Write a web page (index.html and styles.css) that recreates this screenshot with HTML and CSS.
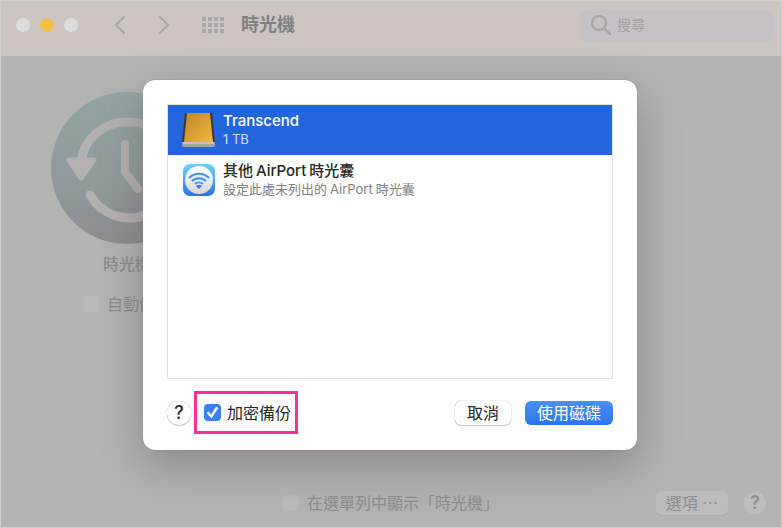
FILE: index.html
```html
<!DOCTYPE html>
<html lang="zh-Hant">
<head>
  <meta charset="UTF-8" />
  <meta name="viewport" content="width=device-width, initial-scale=1" />
  <title>時光機</title>
  <link rel="stylesheet" href="styles.css">
</head>
<body>

  <div class="window">
    <!-- Toolbar -->
    <header class="toolbar">
      <div class="lights">
        <button class="light" aria-label="關閉"></button>
        <button class="light yellow" aria-label="縮到最小"></button>
        <button class="light" aria-label="縮放"></button>
      </div>
      <nav class="nav">
        <button class="icon-button" aria-label="上一頁">
          <svg width="12" height="18" viewBox="0 0 12 18"><path d="M10 1 2 9l8 8" /></svg>
        </button>
        <button class="icon-button" aria-label="下一頁">
          <svg width="12" height="18" viewBox="0 0 12 18"><path d="m2 1 8 8-8 8" /></svg>
        </button>
      </nav>
      <button class="icon-button grid-button" aria-label="顯示全部">
        <svg width="22" height="16" viewBox="0 0 22 16">
          <path d="M0 2h22M0 8h22M0 14h22" />
        </svg>
      </button>
      <h1 class="title">時光機</h1>
      <div class="search">
        <svg width="20" height="20" viewBox="0 0 20 20"><circle cx="8" cy="8" r="7" /><path d="m13 13 6 6" /></svg>
        <input type="search" placeholder="搜尋" aria-label="搜尋" />
      </div>
    </header>

    <!-- Preference pane -->
    <main class="pane">
      <section class="sidebar">
        <svg class="logo" width="152" height="152" viewBox="0 0 152 152">
          <defs>
            <linearGradient id="disc" x1="0" y1="0" x2="0" y2="1">
              <stop offset="0" stop-color="#92a4a3" />
              <stop offset="0.6" stop-color="#909a9a" />
              <stop offset="1" stop-color="#8c8c8d" />
            </linearGradient>
          </defs>
          <circle cx="76" cy="76" r="76" fill="url(#disc)" />
          <path class="ring" d="M30 69A46 46 0 0 1 76 30A46 48 0 1 1 39 103" />
          <path class="arrow" d="M18 68h25l-13 18z" />
          <path class="hand" d="M74 52v28l13 17" />
        </svg>
        <h2 class="pane-name">時光機</h2>
        <label class="check"><input type="checkbox" class="dim-box" />自動備份</label>
      </section>
      <footer class="pane-footer">
        <label class="check menu-check"><input type="checkbox" class="dim-box" />在選單列中顯示「時光機」</label>
        <div class="footer-buttons">
          <button class="options">選項 ⋯</button>
          <button class="dim-help" aria-label="輔助說明">?</button>
        </div>
      </footer>
    </main>
  </div>

  <!-- Disk picker sheet -->
  <div class="overlay">
    <div class="sheet" role="dialog" aria-label="選擇磁碟">
      <ul class="disks" role="listbox" aria-label="磁碟">
        <li class="disk selected" role="option" aria-selected="true">
          <svg class="disk-icon" width="36" height="36" viewBox="0 0 36 36">
            <defs>
              <linearGradient id="gold" x1="0" y1="0" x2="1" y2="1">
                <stop offset="0" stop-color="#b9862d" />
                <stop offset="1" stop-color="#f4b73e" />
              </linearGradient>
            </defs>
            <path d="M4 1h27l3 29H1z" fill="#3b3631" />
            <path d="M6 1h23l3 29H3z" fill="url(#gold)" />
            <path d="M1 30h33v3q0 2-2 2H3q-2 0-2-2z" fill="#a5a6a6" />
            <path d="M2 31h31" stroke="#dededc" />
          </svg>
          <div class="disk-text">
            <strong>Transcend</strong>
            <span>1 TB</span>
          </div>
        </li>
        <li class="disk" role="option" aria-selected="false">
          <svg class="disk-icon" width="36" height="36" viewBox="0 0 36 36">
            <defs>
              <linearGradient id="sky" x1="0" y1="0" x2="0" y2="1">
                <stop offset="0" stop-color="#6ed3fb" />
                <stop offset="1" stop-color="#2f70ec" />
              </linearGradient>
              <linearGradient id="pearl" x1="0" y1="0" x2="0" y2="1">
                <stop offset="0" stop-color="#ffffff" />
                <stop offset="1" stop-color="#d5d7da" />
              </linearGradient>
            </defs>
            <rect x="2" y="2" width="32" height="32" rx="7" fill="url(#sky)" />
            <circle cx="18" cy="18" r="14" fill="url(#pearl)" />
            <g fill="none" stroke="#3f93ec" stroke-width="2">
              <path d="M8 16a14 14 0 0 1 20 0" />
              <path d="M11 19a10 10 0 0 1 14 0" />
              <path d="M14 22a6 6 0 0 1 8 0" />
            </g>
            <path d="M15 24q3-2 6 0l-3 3z" fill="#2f77e8" />
          </svg>
          <div class="disk-text">
            <strong>其他<span class="latin">AirPort</span>時光囊</strong>
            <span>設定此處未列出的<span class="latin">AirPort</span>時光囊</span>
          </div>
        </li>
      </ul>
      <div class="actions">
        <button class="help" aria-label="輔助說明">?</button>
        <label class="encrypt"><input type="checkbox" class="blue-box" checked />加密備份</label>
        <button class="btn cancel">取消</button>
        <button class="btn primary">使用磁碟</button>
      </div>
    </div>
  </div>

</body>
</html>
```

FILE: styles.css
```css
* {
  margin: 0;
  padding: 0;
  box-sizing: border-box;
}

body {
  position: relative;
  min-height: 100vh;
  display: flex;
  background: #cfd1d0;
  padding: 1px;
  color: #8b8d8d;
  font: 16px/24px Inter, "Noto Sans CJK TC", sans-serif;
}

button,
input {
  font: inherit;
  color: inherit;
  border: 0;
  background: none;
}

/* ----- Window & toolbar ----- */
.window {
  flex: 1;
  display: flex;
  flex-direction: column;
}

.toolbar {
  display: flex;
  align-items: center;
  height: 55px;
  padding: 0 8px 6px 15px;
  background: #ccc5c2;
  border-bottom: 1px solid #c6c7c5;
}

.lights {
  display: flex;
  gap: 10px;
}

.light {
  width: 14px;
  height: 14px;
  border-radius: 50%;
  background: #dededf;
}

.light.yellow {
  background: #f5bd47;
}

.nav {
  display: flex;
  gap: 32px;
  margin: 0 32px 0 36px;
}

.icon-button {
  display: flex;
}

.icon-button path {
  fill: none;
  stroke: #a9a8a7;
  stroke-width: 2;
  stroke-linecap: round;
  stroke-linejoin: round;
}

.grid-button path {
  stroke-width: 4;
  stroke-linecap: butt;
  stroke-dasharray: 4 2;
}

.title {
  margin-left: 17px;
  font-size: 18px;
  line-height: 24px;
  font-weight: 700;
  color: #7f8080;
}

.search {
  display: flex;
  align-items: center;
  gap: 6px;
  width: 193px;
  height: 33px;
  margin-left: auto;
  padding: 0 11px;
  border-radius: 8px;
  background: #c5c1c4;
}

.search svg {
  flex: none;
  fill: none;
  stroke: #a5a3a4;
  stroke-width: 2;
  stroke-linecap: round;
}

.search input {
  min-width: 0;
  flex: 1;
  font-size: 14px;
}

.search input::placeholder {
  color: #a3a1a3;
}

/* ----- Preference pane ----- */
.pane {
  flex: 1;
  display: flex;
  flex-direction: column;
  justify-content: space-between;
  padding: 36px 15px 12px;
  background: #b2b4b2;
}

.sidebar {
  display: flex;
  flex-direction: column;
  align-items: center;
  align-self: flex-start;
  width: 152px;
  margin-left: 35px;
}

.ring,
.hand {
  fill: none;
  stroke: #b3b1b2;
  stroke-width: 9;
  stroke-linecap: round;
  stroke-linejoin: round;
}

.hand {
  stroke-width: 8;
}

.arrow {
  fill: #b3b1b2;
  stroke: #b3b1b2;
  stroke-width: 5;
  stroke-linejoin: round;
}

.pane-name {
  margin: 8px 0 16px;
  font-size: 16px;
  line-height: 24px;
  font-weight: 500;
}

.check {
  display: flex;
  align-items: center;
  gap: 8px;
  white-space: nowrap;
}

.dim-box {
  appearance: none;
  width: 16px;
  height: 16px;
  border-radius: 4px;
  background: #b9bab9;
}

.pane-footer {
  display: grid;
  grid-template-columns: 1fr auto 1fr;
  align-items: center;
}

.menu-check {
  grid-column: 2;
}

.footer-buttons {
  display: flex;
  align-items: center;
  justify-content: flex-end;
  gap: 16px;
}

.options {
  width: 72px;
  height: 24px;
  border-radius: 6px;
  background: #bcbcbc;
  box-shadow: 0 1px 1px #a9abaa;
  white-space: nowrap;
}

.dim-help {
  width: 22px;
  height: 22px;
  border-radius: 50%;
  background: #bcbdbc;
  font-size: 18px;
  line-height: 22px;
  font-weight: 500;
}

/* ----- Sheet ----- */
.overlay {
  position: absolute;
  inset: 0;
  display: flex;
  justify-content: center;
  padding: 80px 18px 78px 16px;
  overflow: hidden;
}

.sheet {
  display: flex;
  flex-direction: column;
  gap: 12px;
  width: 100%;
  max-width: 494px;
  padding: 24px 24px 16px;
  border-radius: 12px;
  background: #fdfefd;
  box-shadow: 0 0 1px #6c6c6c, 0 16px 44px rgba(90, 80, 88, 0.44);
}

.disks {
  flex: 1;
  list-style: none;
  border: 1px solid #e0e1e0;
}

.disk {
  display: flex;
  align-items: center;
  gap: 6px;
  height: 50px;
  padding: 0 13px;
  color: #262626;
}

.disk-icon {
  flex: none;
}

.disk-text {
  display: flex;
  flex-direction: column;
}

.disk-text strong {
  font-size: 15px;
  line-height: 18px;
  font-weight: 500;
}

.disk-text > span {
  font-size: 13px;
  line-height: 18px;
  color: #818181;
}

.latin {
  margin: 0 3px;
}

.disk.selected {
  background: #2265dc;
  color: #fff;
}

.disk.selected .disk-text > span {
  color: #d0def7;
}

/* Buttons under the list */
.actions {
  display: flex;
  align-items: center;
}

.help {
  width: 24px;
  height: 24px;
  border-radius: 50%;
  background: #fff;
  box-shadow: 0 0 1px #999, 0 1px 1px #ccc;
  color: #262626;
  font-size: 18px;
  font-weight: 500;
}

.encrypt {
  display: flex;
  align-items: center;
  gap: 6px;
  height: 43px;
  margin: 0 auto 0 3px;
  padding: 0 4px 0 7px;
  border: 3px solid #fb3199;
  color: #262626;
}

.blue-box {
  appearance: none;
  display: grid;
  place-items: center;
  width: 17px;
  height: 17px;
  border-radius: 4px;
  background: #3b82f1;
}

.blue-box:checked::before {
  content: "";
  width: 12px;
  height: 12px;
  background: #fff;
  clip-path: polygon(0 55%, 16% 42%, 38% 68%, 80% 0, 98% 12%, 42% 100%);
}

.btn {
  height: 24px;
  padding: 0 12px;
  border-radius: 6px;
  line-height: 24px;
}

.cancel {
  margin-right: 14px;
  background: #fff;
  box-shadow: 0 0 1px #888, 0 1px 1px #ccc;
  color: #262626;
}

.primary {
  background: linear-gradient(#4a8ff5, #2c74eb);
  color: #fff;
}
```
